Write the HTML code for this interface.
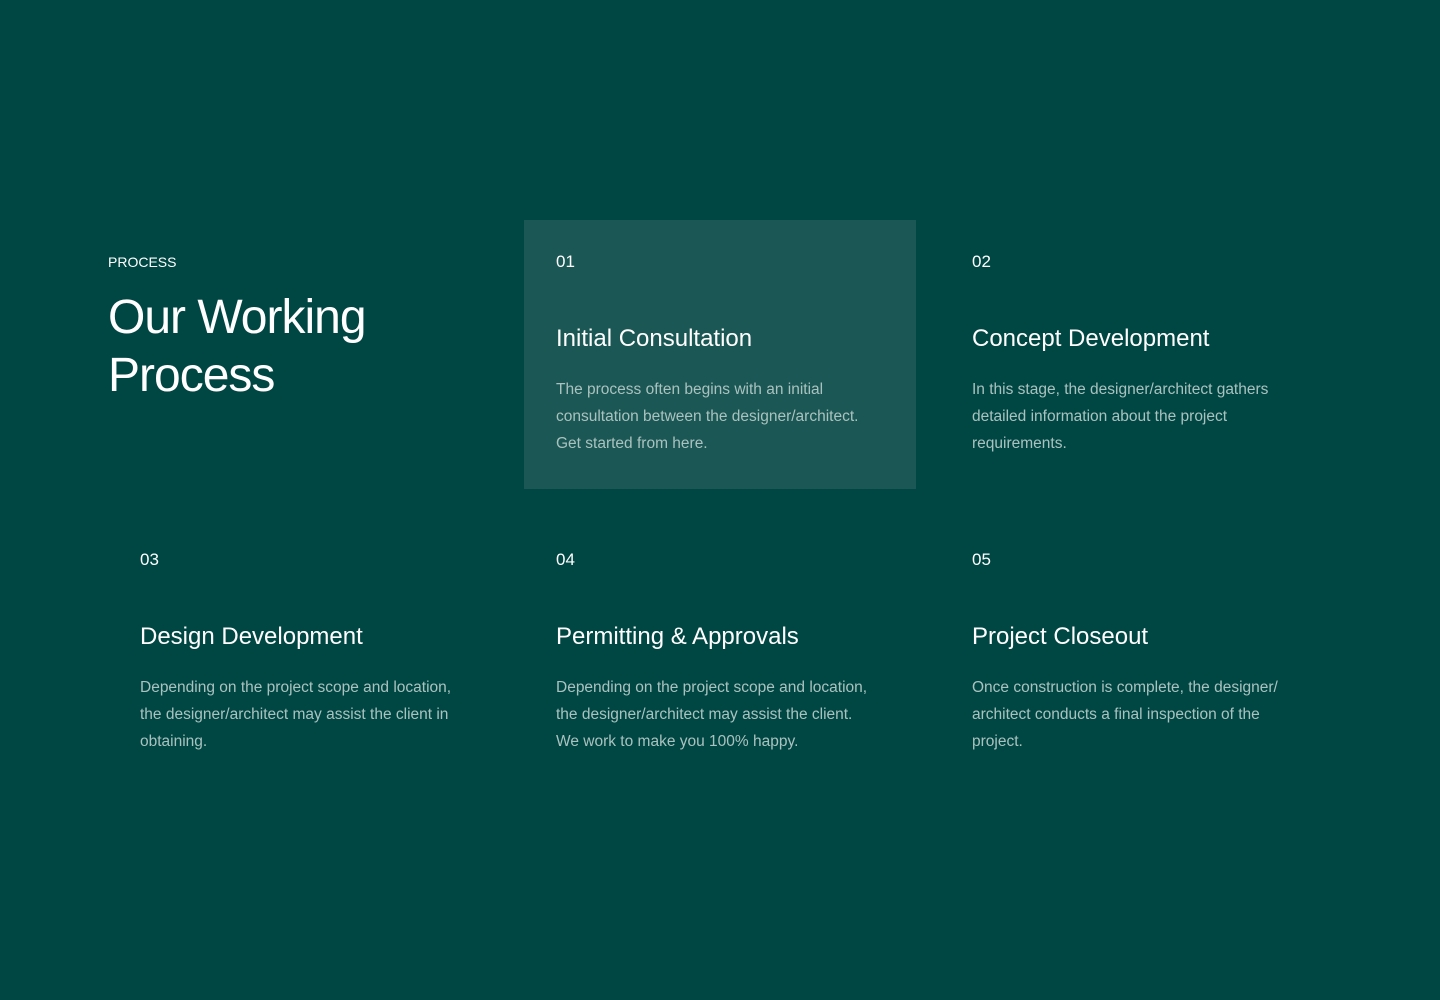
<!DOCTYPE html>
<html><head><style>
body{margin:0;width:1440px;height:1000px;background:#004744;font-family:"Liberation Sans",sans-serif;color:#fff;position:relative;overflow:hidden}
.lbl{position:absolute;left:108px;top:254px;font-size:14px}
h1{position:absolute;left:108px;top:289px;margin:0;font-weight:400;font-size:48px;line-height:58px;letter-spacing:-1px}
.c{position:absolute;width:392px;height:269px;box-sizing:border-box;padding:32px}
.c.a{background:#1b5754}
.n{position:absolute;left:32px;top:32px;font-size:17px;line-height:20px}
.t{position:absolute;left:32px;top:104px;font-size:24px;line-height:30px}
.d{position:absolute;left:32px;top:156px;white-space:nowrap;font-size:15.5px;line-height:27px;color:#aac2bf}
</style></head><body>
<div class="lbl">PROCESS</div>
<h1>Our Working<br>Process</h1>
<div class="c a" style="left:524px;top:220px"><div class="n">01</div><div class="t">Initial Consultation</div><div class="d">The process often begins with an initial<br>consultation between the designer/architect.<br>Get started from here.</div></div>
<div class="c" style="left:940px;top:220px"><div class="n">02</div><div class="t">Concept Development</div><div class="d">In this stage, the designer/architect gathers<br>detailed information about the project<br>requirements.</div></div>
<div class="c" style="left:108px;top:518px"><div class="n">03</div><div class="t">Design Development</div><div class="d">Depending on the project scope and location,<br>the designer/architect may assist the client in<br>obtaining.</div></div>
<div class="c" style="left:524px;top:518px"><div class="n">04</div><div class="t">Permitting &amp; Approvals</div><div class="d">Depending on the project scope and location,<br>the designer/architect may assist the client.<br>We work to make you 100% happy.</div></div>
<div class="c" style="left:940px;top:518px"><div class="n">05</div><div class="t">Project Closeout</div><div class="d">Once construction is complete, the designer/<br>architect conducts a final inspection of the<br>project.</div></div>
</body></html>
